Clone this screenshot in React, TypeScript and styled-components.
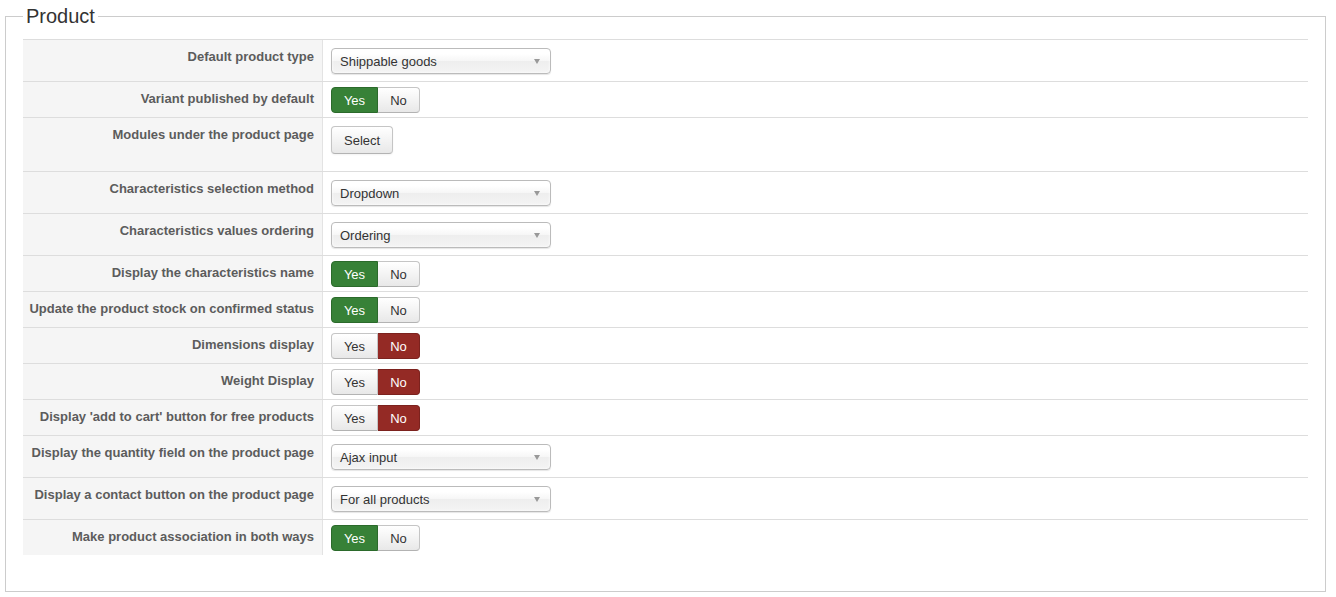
import React from "react";
import styled, { createGlobalStyle, css } from "styled-components";

const Global = createGlobalStyle`
  html, body { margin: 0; padding: 0; background: #fff; }
  body { font-family: "Liberation Sans", Arial, sans-serif; font-size: 13px; color: #333; }
`;

const Page = styled.div`
  padding: 5px 10px 0 5px;
`;

const Fieldset = styled.fieldset`
  margin: 0;
  padding: 0 17px 36px 17px;
  border: 1px solid #ccc;
  min-width: 0;
`;

const Legend = styled.legend`
  padding: 0 3px;
  margin: 0;
  font-size: 20px;
  line-height: 22px;
  color: #333;
  font-weight: normal;
`;

const Table = styled.div`
  margin-top: 12px;
  display: flex;
  flex-direction: column;
`;

const Row = styled.div`
  display: grid;
  grid-template-columns: 300px 1fr;
  border-top: 1px solid #ddd;
`;

const Label = styled.div`
  background: #f5f5f5;
  border-right: 1px solid #e3e3e3;
  text-align: right;
  font-weight: bold;
  color: #5c5c5c;
  line-height: 18px;
  white-space: nowrap;
  padding: 8px 8px 0 0;
`;

type Kind = "select" | "toggle" | "button";

const Cell = styled.div<{ $kind: Kind }>`
  padding-left: 8px;
  ${(p) =>
    p.$kind === "select"
      ? css`padding-top: 8px; padding-bottom: 7px;`
      : p.$kind === "toggle"
      ? css`padding-top: 5px; padding-bottom: 4px;`
      : css`padding-top: 8px; padding-bottom: 17px;`}
`;

const SelectBox = styled.div`
  box-sizing: border-box;
  width: 220px;
  height: 26px;
  border: 1px solid #bbb;
  border-radius: 4px;
  background: linear-gradient(#fff 20%, #f6f6f6 50%, #eee 52%, #f4f4f4 100%);
  box-shadow: 0 1px 1px rgba(0, 0, 0, 0.1), inset 0 0 3px #fff;
  display: flex;
  align-items: center;
  justify-content: space-between;
  padding: 0 10px 0 8px;
  color: #333;
  font-size: 13px;
`;

const Arrow = styled.span`
  width: 0;
  height: 0;
  border-left: 3.5px solid transparent;
  border-right: 3.5px solid transparent;
  border-top: 5px solid #999;
`;

const Group = styled.div`
  display: inline-flex;
  height: 26px;
`;

const ToggleBtn = styled.span<{ $active?: "yes" | "no"; $first?: boolean }>`
  box-sizing: border-box;
  height: 26px;
  display: flex;
  align-items: center;
  justify-content: center;
  font-size: 13px;
  border: 1px solid #c5c5c5;
  border-bottom-color: #b3b3b3;
  background: linear-gradient(#fff, #e8e8e8);
  color: #333;
  ${(p) =>
    p.$first
      ? css`width: 47px; border-radius: 4px 0 0 4px;`
      : css`width: 42px; border-radius: 0 4px 4px 0; border-left: none;`}
  ${(p) =>
    p.$active === "yes" &&
    css`
      background: #378137;
      border-color: #2b6a2b;
      color: #fff;
    `}
  ${(p) =>
    p.$active === "no" &&
    css`
      background: #942a25;
      border-color: #7c221e;
      color: #fff;
    `}
`;

const Button = styled.span`
  box-sizing: border-box;
  display: inline-flex;
  align-items: center;
  height: 28px;
  padding: 0 12px;
  border: 1px solid #c5c5c5;
  border-bottom-color: #b3b3b3;
  border-radius: 4px;
  background: linear-gradient(#fff, #e8e8e8);
  box-shadow: 0 1px 2px rgba(0, 0, 0, 0.05);
  font-size: 13px;
  color: #333;
`;

type Item =
  | { label: string; kind: "select"; value: string }
  | { label: string; kind: "toggle"; yes: boolean }
  | { label: string; kind: "button"; value: string };

const items: Item[] = [
  { label: "Default product type", kind: "select", value: "Shippable goods" },
  { label: "Variant published by default", kind: "toggle", yes: true },
  { label: "Modules under the product page", kind: "button", value: "Select" },
  { label: "Characteristics selection method", kind: "select", value: "Dropdown" },
  { label: "Characteristics values ordering", kind: "select", value: "Ordering" },
  { label: "Display the characteristics name", kind: "toggle", yes: true },
  { label: "Update the product stock on confirmed status", kind: "toggle", yes: true },
  { label: "Dimensions display", kind: "toggle", yes: false },
  { label: "Weight Display", kind: "toggle", yes: false },
  { label: "Display 'add to cart' button for free products", kind: "toggle", yes: false },
  { label: "Display the quantity field on the product page", kind: "select", value: "Ajax input" },
  { label: "Display a contact button on the product page", kind: "select", value: "For all products" },
  { label: "Make product association in both ways", kind: "toggle", yes: true },
];

function Control({ item }: { item: Item }) {
  if (item.kind === "select")
    return (
      <SelectBox>
        <span>{item.value}</span>
        <Arrow />
      </SelectBox>
    );
  if (item.kind === "button") return <Button>{item.value}</Button>;
  return (
    <Group>
      <ToggleBtn $first $active={item.yes ? "yes" : undefined}>Yes</ToggleBtn>
      <ToggleBtn $active={item.yes ? undefined : "no"}>No</ToggleBtn>
    </Group>
  );
}

export default function App() {
  return (
    <>
      <Global />
      <Page>
        <Fieldset>
          <Legend>Product</Legend>
          <Table>
            {items.map((it) => (
              <Row key={it.label}>
                <Label>{it.label}</Label>
                <Cell $kind={it.kind}>
                  <Control item={it} />
                </Cell>
              </Row>
            ))}
          </Table>
        </Fieldset>
      </Page>
    </>
  );
}
